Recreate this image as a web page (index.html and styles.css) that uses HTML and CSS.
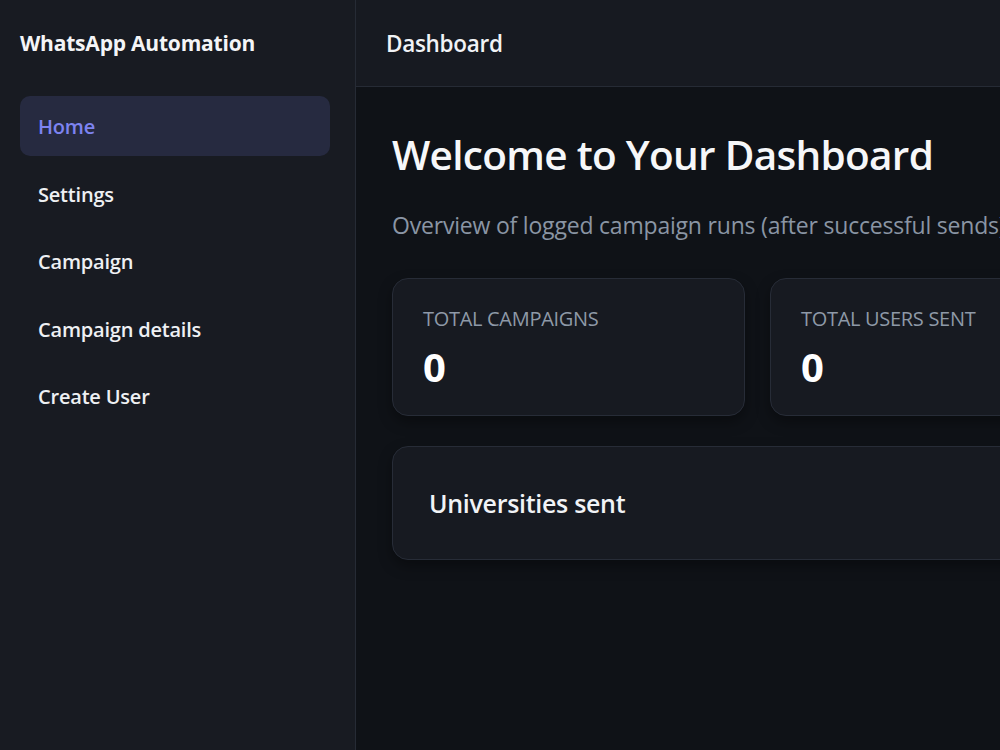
FILE: index.html
```html
<!DOCTYPE html>
<html lang="en">
<head>
    <meta charset="UTF-8">
    <meta name="viewport" content="width=device-width, initial-scale=1.0">
    <title>WhatsApp Automation - Dashboard</title>
    <link rel="stylesheet" href="styles.css">
</head>
<body>
    <aside class="sidebar">
        <div class="brand">WhatsApp Automation</div>
        <nav class="nav">
            <a href="#" class="nav-item active">Home</a>
            <a href="#" class="nav-item">Settings</a>
            <a href="#" class="nav-item">Campaign</a>
            <a href="#" class="nav-item">Campaign details</a>
            <a href="#" class="nav-item">Create User</a>
        </nav>
    </aside>
    <main class="main">
        <header class="topbar">Dashboard</header>
        <section class="content">
            <h1 class="title">Welcome to Your Dashboard</h1>
            <p class="subtitle">Overview of logged campaign runs (after successful sends).</p>
            <div class="stats">
                <div class="card stat">
                    <div class="stat-label">Total campaigns</div>
                    <div class="stat-value">0</div>
                </div>
                <div class="card stat">
                    <div class="stat-label">Total users sent</div>
                    <div class="stat-value">0</div>
                </div>
            </div>
            <div class="card panel">
                <h2 class="panel-title">Universities sent</h2>
            </div>
        </section>
    </main>
</body>
</html>
```

FILE: styles.css
```css
* {
    box-sizing: border-box;
}
html, body {
    height: 100%;
}
body {
    margin: 0;
    display: flex;
    background: #0f1217;
    color: #f1f3f6;
    font-family: 'Open Sans', 'Noto Sans', sans-serif;
    overflow: hidden;
}
.sidebar {
    width: 356px;
    flex-shrink: 0;
    background: #181b22;
    border-right: 1px solid #262b35;
    padding: 0 25px 0 20px;
}
.brand {
    height: 86px;
    display: flex;
    align-items: center;
    font-size: 21px;
    font-weight: 700;
    letter-spacing: -0.2px;
    color: #f4f5f7;
}
.nav {
    display: flex;
    flex-direction: column;
    gap: 7.5px;
    margin-top: 10px;
}
.nav-item {
    display: block;
    height: 60px;
    line-height: 62px;
    padding: 0 18px;
    border-radius: 10px;
    color: #eef0f3;
    text-decoration: none;
    font-size: 20px;
    font-weight: 600;
    letter-spacing: -0.2px;
}
.nav-item.active {
    background: #262a40;
    color: #7d83f1;
}
.main {
    flex: 1;
    min-width: 0;
    overflow: hidden;
}
.topbar {
    height: 87px;
    background: #171a21;
    border-bottom: 1px solid #262b35;
    display: flex;
    align-items: center;
    padding-left: 30px;
    font-size: 22.5px;
    font-weight: 600;
    letter-spacing: -0.3px;
    color: #f1f3f6;
}
.content {
    width: 1200px;
    padding: 41px 36px;
}
.title {
    margin: 0;
    font-size: 40.5px;
    font-weight: 600;
    letter-spacing: -0.7px;
    line-height: 54px;
    color: #f6f7f9;
}
.subtitle {
    margin: 28px 0 0;
    font-size: 23px;
    line-height: 30px;
    color: #8a95a4;
    letter-spacing: -0.2px;
}
.card {
    background: #171a21;
    border: 1px solid #272c37;
    border-radius: 16px;
    box-shadow: 0 6px 14px rgba(0, 0, 0, 0.35);
}
.stats {
    display: grid;
    grid-template-columns: repeat(3, 353px);
    gap: 25px;
    margin-top: 38px;
}
.stat {
    height: 138px;
    padding: 26px 30px;
}
.stat-label {
    width: fit-content;
    font-size: 20px;
    line-height: 28px;
    text-transform: uppercase;
    color: #8e99a7;
    letter-spacing: -0.3px;
}
.stat-value {
    width: fit-content;
    margin-top: 10px;
    font-size: 40px;
    font-weight: 700;
    line-height: 48px;
    color: #ffffff;
}
.panel {
    margin-top: 30px;
    height: 114px;
    padding: 0 36px;
    display: flex;
    align-items: center;
}
.panel-title {
    margin: 0;
    font-size: 25px;
    font-weight: 600;
    letter-spacing: -0.3px;
    color: #f1f3f6;
}
```
